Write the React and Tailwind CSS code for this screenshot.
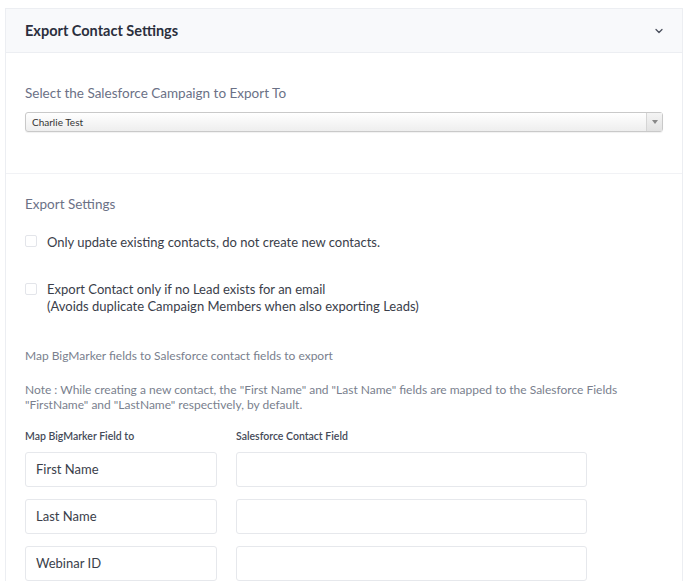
import { ChevronDown } from 'lucide-react';

const font = { fontFamily: 'Lato, "Open Sans", sans-serif' };

const rows = ['First Name', 'Last Name', 'Webinar ID'];

function Checkbox() {
    return <span className="mt-[2px] w-3 h-3 shrink-0 border border-[#e3e5ea] rounded-[2px] bg-white" />;
}

export default function App() {
    return (
        <div className="bg-white min-h-screen pt-2 px-[5px]" style={font}>
            <div className="border border-[#eceef2] border-b-0">
                {/* header */}
                <div className="h-11 bg-[#f8f9fb] border-b border-[#eceef2] flex items-center justify-between pl-[19px] pr-[17px]">
                    <span className="text-[14.5px] font-bold text-[#2b2f3d]">Export Contact Settings</span>
                    <ChevronDown className="w-3 h-3 text-[#4a4f5c]" strokeWidth={2.5} />
                </div>

                {/* campaign select */}
                <div className="px-[19px] pt-[30px] pb-[41px] border-b border-[#f1f2f5]">
                    <div className="text-[13.5px] text-[#6b7186] mb-[9px]">Select the Salesforce Campaign to Export To</div>
                    <div className="h-[20px] flex border border-[#c9c9c9] rounded-[3px] bg-gradient-to-b from-white to-[#eeeeee] shadow-[0_1px_1px_rgba(0,0,0,0.06)]">
                        <span className="flex-1 pl-[6px] text-[10px] text-[#333] flex items-center">Charlie Test</span>
                        <span className="w-[16px] border-l border-[#d5d5d5] flex items-center justify-center bg-gradient-to-b from-[#f4f4f4] to-[#e2e2e2]">
                            <span className="w-0 h-0 border-l-[3px] border-r-[3px] border-t-[4px] border-l-transparent border-r-transparent border-t-[#888]" />
                        </span>
                    </div>
                </div>

                {/* export settings */}
                <div className="px-[19px] pt-[20px]">
                    <div className="text-[13.5px] text-[#6b7186]">Export Settings</div>
                    <div className="flex gap-[10px] mt-[18px] text-[13px] text-[#3a3e4a]">
                        <Checkbox />
                        <span>Only update existing contacts, do not create new contacts.</span>
                    </div>
                    <div className="flex gap-[10px] mt-[29px] text-[13px] text-[#3a3e4a] leading-[17px]">
                        <Checkbox />
                        <span>
                            Export Contact only if no Lead exists for an email
                            <br />
                            (Avoids duplicate Campaign Members when also exporting Leads)
                        </span>
                    </div>

                    <div className="mt-[32px] text-[12px] text-[#7a7f8e]">Map BigMarker fields to Salesforce contact fields to export</div>
                    <div className="mt-[17px] text-[12px] text-[#7a7f8e] leading-[15px]">
                        Note : While creating a new contact, the "First Name" and "Last Name" fields are mapped to the Salesforce Fields
                        <br />
                        "FirstName" and "LastName" respectively, by default.
                    </div>

                    <div className="mt-[17px] flex text-[10.5px] font-semibold text-[#444a58]">
                        <span className="w-[211px]">Map BigMarker Field to</span>
                        <span>Salesforce Contact Field</span>
                    </div>

                    <div className="mt-[7px] flex flex-col gap-[12px]">
                        {rows.map(r => (
                            <div key={r} className="flex gap-[19px]">
                                <div className="w-[192px] h-[35px] border border-[#e6e8ec] rounded-[3px] flex items-center px-[10px] text-[13px] text-[#3a3e4a]">
                                    {r}
                                </div>
                                <div className="w-[351px] h-[35px] border border-[#e6e8ec] rounded-[3px]" />
                            </div>
                        ))}
                    </div>
                </div>
            </div>
        </div>
    );
}
